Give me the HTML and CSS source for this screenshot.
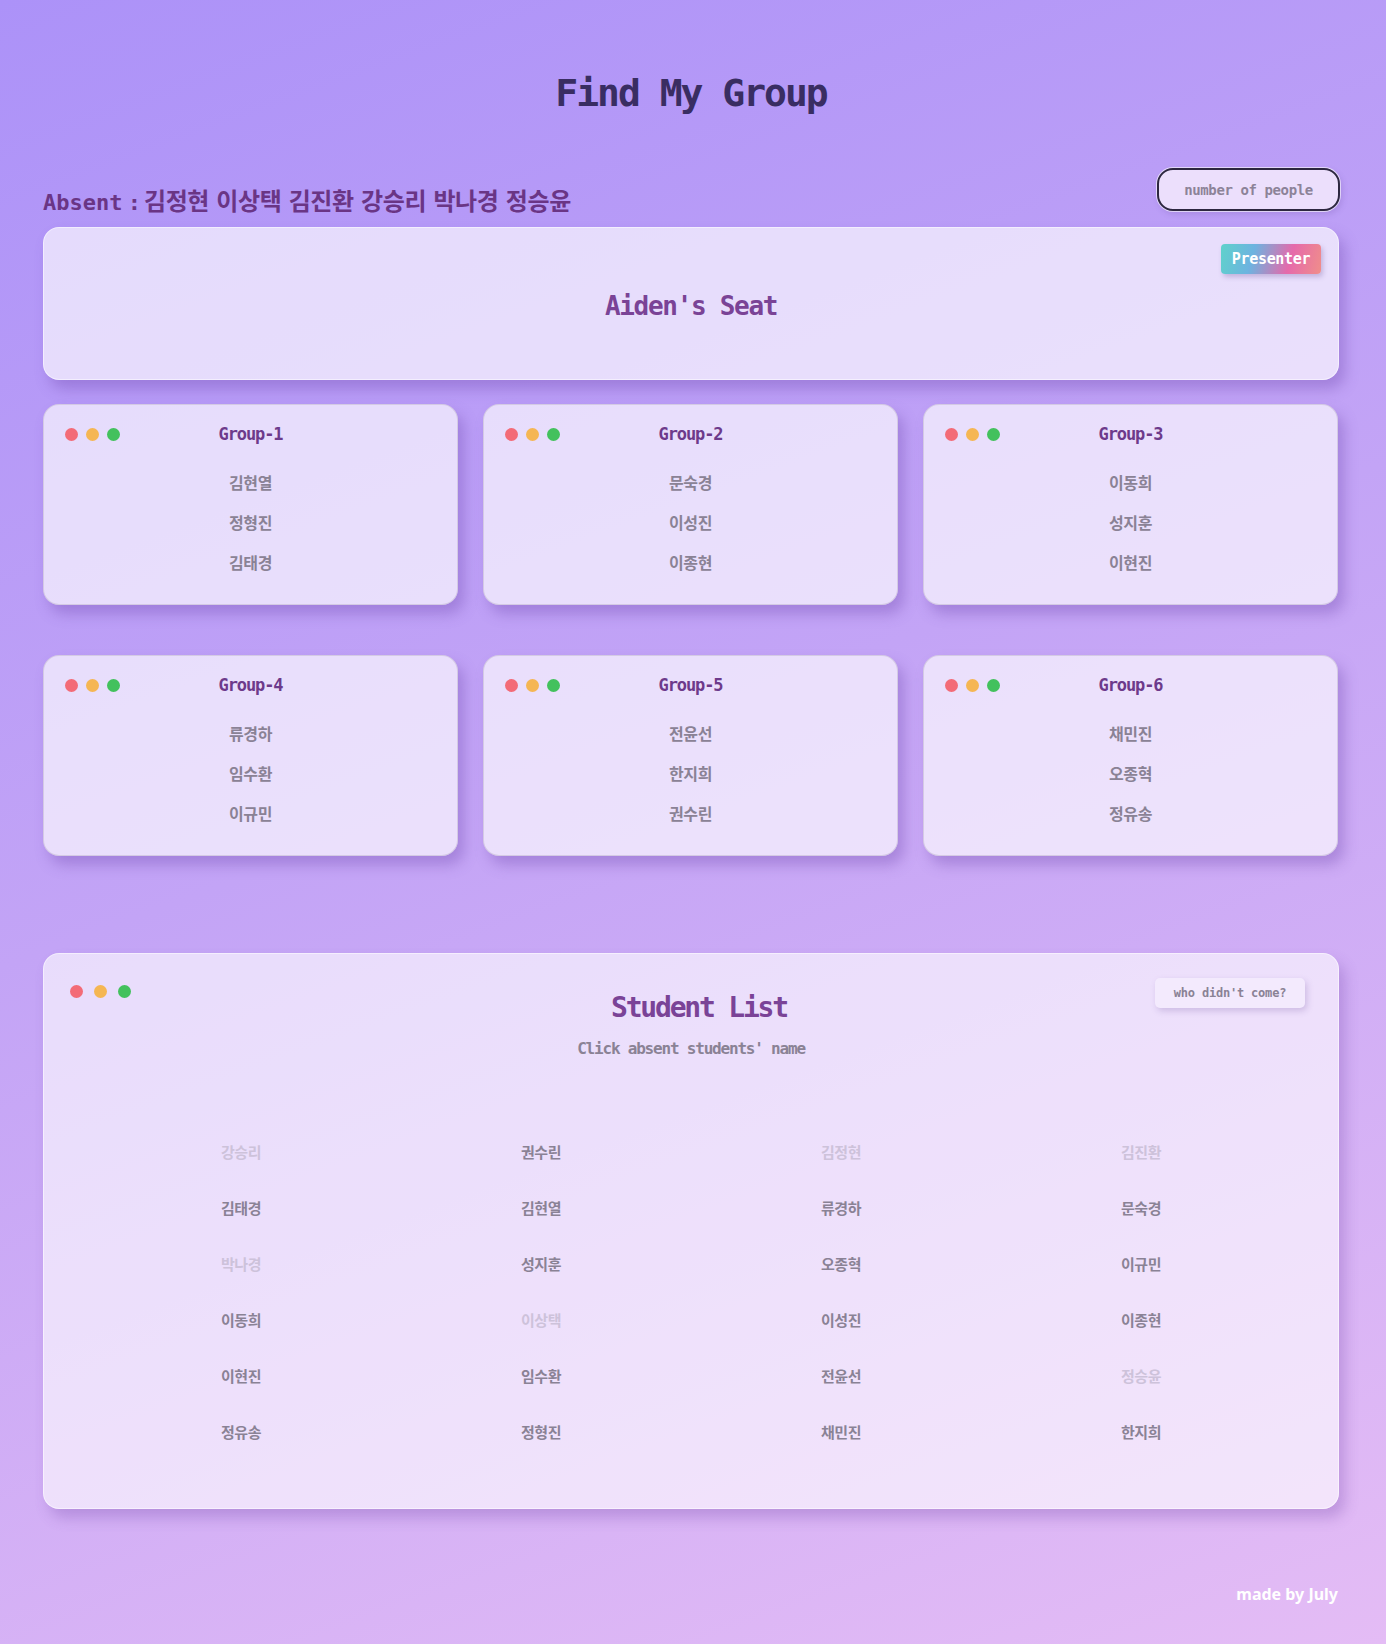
FILE: index.html
```html
<!DOCTYPE html>
<html lang="ko">
<head>
<meta charset="utf-8">
<title>Find My Group</title>
<link rel="stylesheet" href="styles.css">
</head>
<body>
<div class="page">
  <h1 class="title">Find My Group</h1>

  <div class="absent-row">
    <p class="absent"><span class="absent-label">Absent :</span><span class="absent-names">김정현 이상택 김진환 강승리 박나경 정승윤</span></p>
    <input class="count-input" type="text" placeholder="number of people">
  </div>

  <section class="presenter-card">
    <span class="badge">Presenter</span>
    <h2 class="seat">Aiden's Seat</h2>
  </section>

  <div class="groups">
    <div class="group-card">
      <div class="group-head">
        <div class="dots"><span class="dot red"></span><span class="dot yellow"></span><span class="dot green"></span></div>
        <h3 class="group-title">Group-1</h3>
        <span></span>
      </div>
      <ul class="members"><li>김현열</li><li>정형진</li><li>김태경</li></ul>
    </div>
    <div class="group-card">
      <div class="group-head">
        <div class="dots"><span class="dot red"></span><span class="dot yellow"></span><span class="dot green"></span></div>
        <h3 class="group-title">Group-2</h3>
        <span></span>
      </div>
      <ul class="members"><li>문숙경</li><li>이성진</li><li>이종현</li></ul>
    </div>
    <div class="group-card">
      <div class="group-head">
        <div class="dots"><span class="dot red"></span><span class="dot yellow"></span><span class="dot green"></span></div>
        <h3 class="group-title">Group-3</h3>
        <span></span>
      </div>
      <ul class="members"><li>이동희</li><li>성지훈</li><li>이현진</li></ul>
    </div>
    <div class="group-card">
      <div class="group-head">
        <div class="dots"><span class="dot red"></span><span class="dot yellow"></span><span class="dot green"></span></div>
        <h3 class="group-title">Group-4</h3>
        <span></span>
      </div>
      <ul class="members"><li>류경하</li><li>임수환</li><li>이규민</li></ul>
    </div>
    <div class="group-card">
      <div class="group-head">
        <div class="dots"><span class="dot red"></span><span class="dot yellow"></span><span class="dot green"></span></div>
        <h3 class="group-title">Group-5</h3>
        <span></span>
      </div>
      <ul class="members"><li>전윤선</li><li>한지희</li><li>권수린</li></ul>
    </div>
    <div class="group-card">
      <div class="group-head">
        <div class="dots"><span class="dot red"></span><span class="dot yellow"></span><span class="dot green"></span></div>
        <h3 class="group-title">Group-6</h3>
        <span></span>
      </div>
      <ul class="members"><li>채민진</li><li>오종혁</li><li>정유송</li></ul>
    </div>
  </div>

  <section class="student-card">
    <div class="student-head">
      <div class="dots big"><span class="dot red"></span><span class="dot yellow"></span><span class="dot green"></span></div>
      <div class="student-heading">
        <h2 class="student-title">Student List</h2>
        <p class="student-sub">Click absent students' name</p>
      </div>
      <div class="head-right"><button class="who-btn" type="button">who didn't come?</button></div>
    </div>
    <ul class="student-grid">
      <li class="off">강승리</li><li>권수린</li><li class="off">김정현</li><li class="off">김진환</li>
      <li>김태경</li><li>김현열</li><li>류경하</li><li>문숙경</li>
      <li class="off">박나경</li><li>성지훈</li><li>오종혁</li><li>이규민</li>
      <li>이동희</li><li class="off">이상택</li><li>이성진</li><li>이종현</li>
      <li>이현진</li><li>임수환</li><li>전윤선</li><li class="off">정승윤</li>
      <li>정유송</li><li>정형진</li><li>채민진</li><li>한지희</li>
    </ul>
  </section>

  <footer class="credit">made by July</footer>
</div>
</body>
</html>
```

FILE: styles.css
```css
* { box-sizing: border-box; }

html {
  background: #c0a2f6;
}

body {
  margin: 0;
  min-height: 1644px;
  background: linear-gradient(160deg, #ac92f8 0%, #c3a4f6 45%, #e4bcf5 100%);
  font-family: "DejaVu Sans Mono", "Noto Sans CJK KR", monospace;
  font-weight: 700;
}

.page {
  width: 1296px;
  margin-left: 43px;
  padding-top: 69px;
  padding-bottom: 41px;
}

.title {
  margin: 0;
  text-align: center;
  font-size: 38px;
  line-height: 48px;
  letter-spacing: -2px;
  color: #392d62;
  font-weight: 700;
}

.absent-row {
  margin-top: 51px;
  display: flex;
  justify-content: space-between;
  align-items: flex-end;
  height: 43px;
}

.absent {
  margin: 0 0 -5px 0;
  font-size: 22px;
  line-height: 26px;
  color: #6a3585;
  font-weight: 700;
  white-space: nowrap;
}

.absent-label {
  word-spacing: -8px;
  margin-right: 3px;
}

.absent-names {
  font-family: "Noto Sans CJK KR", sans-serif;
  font-size: 24px;
  word-spacing: 1px;
  letter-spacing: -0.4px;
}

.count-input {
  width: 183px;
  height: 43px;
  margin-right: -1px;
  border: 2px solid #2d2740;
  border-radius: 16px;
  background: #ecdffc;
  box-shadow: 0 0 0 1px rgba(255, 255, 255, 0.6), 2px 3px 6px rgba(90, 60, 150, 0.2);
  font-family: "DejaVu Sans Mono", "Noto Sans CJK KR", monospace;
  font-weight: 700;
  font-size: 14px;
  letter-spacing: -0.4px;
  text-align: center;
  color: #4a4360;
  outline: none;
}

.count-input::placeholder {
  color: #8c8398;
}

.presenter-card {
  position: relative;
  margin-top: 16px;
  height: 153px;
  border-radius: 16px;
  background: rgba(255, 255, 255, 0.66);
  border: 1px solid rgba(255, 255, 255, 0.5);
  box-shadow: 6px 9px 14px rgba(105, 65, 170, 0.35);
  display: flex;
  align-items: center;
  justify-content: center;
  padding-top: 4px;
}

.badge {
  position: absolute;
  top: 16px;
  right: 17px;
  width: 100px;
  height: 30px;
  border-radius: 4px;
  background: linear-gradient(105deg, #5fd2cb 0%, #6db3e0 32%, #e56aab 68%, #f08e8a 100%);
  box-shadow: 2px 3px 5px rgba(80, 50, 130, 0.25);
  color: #ffffff;
  font-size: 15px;
  line-height: 30px;
  letter-spacing: -0.3px;
  text-align: center;
  font-weight: 700;
}

.seat {
  margin: 0;
  font-size: 26px;
  line-height: 32px;
  letter-spacing: -1.3px;
  color: #7a4396;
  font-weight: 700;
}

.groups {
  margin-top: 24px;
  display: grid;
  grid-template-columns: repeat(3, 415px);
  column-gap: 25px;
  row-gap: 50px;
}

.group-card {
  height: 201px;
  border-radius: 16px;
  background: rgba(255, 255, 255, 0.66);
  border: 1px solid rgba(210, 200, 225, 0.9);
  box-shadow: 6px 9px 14px rgba(105, 65, 170, 0.35);
  padding: 19px 21px 0 21px;
}

.group-head {
  display: grid;
  grid-template-columns: 1fr auto 1fr;
  align-items: center;
  height: 20px;
}

.dots {
  display: flex;
  gap: 8px;
}

.dot {
  width: 13px;
  height: 13px;
  border-radius: 50%;
  display: block;
}

.dot.red { background: #f36b77; }
.dot.yellow { background: #f5b653; }
.dot.green { background: #43c15d; }

.group-title {
  margin: 0;
  font-size: 17px;
  line-height: 20px;
  letter-spacing: -1.1px;
  color: #6d3a8b;
  font-weight: 700;
}

.members {
  list-style: none;
  margin: 18px 0 0 0;
  padding: 0;
  text-align: center;
}

.members li {
  font-family: "Noto Sans CJK KR", sans-serif;
  font-weight: 700;
  font-size: 16px;
  line-height: 40px;
  letter-spacing: -0.4px;
  color: #8a8295;
}

.student-card {
  margin-top: 97px;
  height: 556px;
  border-radius: 16px;
  background: rgba(255, 255, 255, 0.62);
  border: 1px solid rgba(255, 255, 255, 0.5);
  box-shadow: 6px 9px 14px rgba(115, 70, 170, 0.3);
  padding: 24px 33px 0 26px;
}

.student-head {
  display: grid;
  grid-template-columns: 1fr auto 1fr;
  align-items: start;
}

.dots.big {
  gap: 11px;
  margin-top: 7px;
}

.student-heading {
  text-align: center;
  padding-left: 7px;
}

.student-title {
  margin: 13px 0 0 0;
  padding-left: 16px;
  font-size: 28px;
  line-height: 34px;
  letter-spacing: -2.2px;
  color: #7a4397;
  font-weight: 700;
}

.student-sub {
  margin: 14px 0 0 0;
  font-size: 16px;
  line-height: 20px;
  letter-spacing: -1.2px;
  color: #8a8295;
  font-weight: 700;
}

.head-right {
  display: flex;
  justify-content: flex-end;
}

.who-btn {
  width: 150px;
  height: 30px;
  border: none;
  border-radius: 5px;
  background: #f3eafd;
  box-shadow: 2px 3px 6px rgba(110, 80, 160, 0.25);
  font-family: "DejaVu Sans Mono", "Noto Sans CJK KR", monospace;
  font-weight: 700;
  font-size: 12px;
  letter-spacing: -0.2px;
  color: #8a8295;
  padding: 0;
}

.student-grid {
  list-style: none;
  margin: 65px 15px 0 21px;
  padding: 0;
  display: grid;
  grid-template-columns: repeat(4, 300px);
  grid-auto-rows: 56px;
  text-align: center;
}

.student-grid li {
  font-family: "Noto Sans CJK KR", sans-serif;
  font-weight: 700;
  font-size: 15px;
  line-height: 56px;
  letter-spacing: -0.4px;
  color: #8a8295;
}

.student-grid li.off {
  color: #cdc2da;
}

.credit {
  margin-top: 75px;
  text-align: right;
  font-family: "Noto Sans", sans-serif;
  font-weight: 700;
  font-size: 16px;
  line-height: 20px;
  color: #ffffff;
  padding-right: 1px;
}
```
